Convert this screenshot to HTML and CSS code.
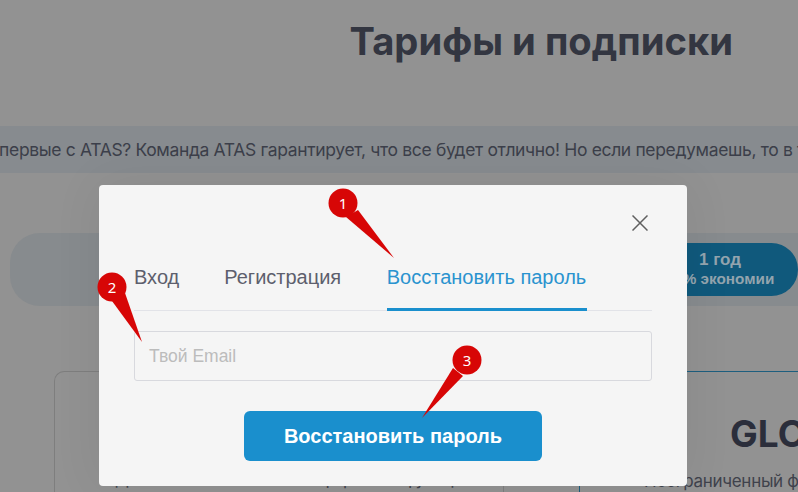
FILE: index.html
```html
<!DOCTYPE html>
<html lang="ru">
<head>
<meta charset="utf-8">
<title>Тарифы и подписки</title>
<link rel="stylesheet" href="styles.css">
</head>
<body>
<main class="page">
  <h1 class="title">Тарифы и подписки</h1>
  <div class="banner"><span class="banner-text">Впервые с ATAS? Команда ATAS гарантирует, что все будет отлично! Но если передумаешь, то в те</span></div>
  <div class="periods">
    <div class="period-year"><b>1 год</b><small>20% экономии</small></div>
  </div>
  <div class="plans">
    <div class="plan plan-left">
      <div class="plan-col"><div class="plan-text">Для ознакомления с платформой и функциями</div></div>
    </div>
    <div class="plan plan-right">
      <div class="plan-name">GLOBAL</div>
      <div class="plan-desc">Неограниченный ф</div>
    </div>
  </div>
</main>

<section class="modal">
  <div class="modal-head">
    <svg class="close" viewBox="0 0 16 16" width="16" height="16"><path d="M.5.5l15 15M15.500.5l-15 15" fill="none" stroke="#5f5f5f" stroke-width="1.500"/></svg>
  </div>
  <nav class="tabs">
    <span class="tab">Вход</span>
    <span class="tab">Регистрация</span>
    <span class="tab tab-active">Восстановить пароль</span>
  </nav>
  <div class="field"><span class="placeholder">Твой Email</span></div>
  <div class="actions"><button class="submit">Восстановить пароль</button></div>
</section>

<svg class="callout-layer" viewBox="0 0 798 492" width="798" height="492">
  <g fill="#d70606">
    <path d="M346 217 L358 210 L394 258 Z"/>
    <circle cx="343" cy="203" r="14.500"/>
    <path d="M112 301 L125 293 L142 342 Z"/>
    <circle cx="112" cy="287" r="14.500"/>
    <path d="M453 368 L463 376 L422 418 Z"/>
    <circle cx="467" cy="360" r="14.500"/>
  </g>
  <g class="callout-num" fill="#fff" text-anchor="middle">
    <text x="343" y="209">1</text>
    <text x="112" y="293">2</text>
    <text x="467" y="366">3</text>
  </g>
</svg>
</body>
</html>
```
FILE: styles.css
```css
* { box-sizing: border-box; }
html, body { margin: 0; height: 100%; }
body {
  width: 798px;
  height: 492px;
  overflow: hidden;
  position: relative;
  background: #929292;
  font-family: "Liberation Sans", Arial, sans-serif;
}
.page { height: 492px; overflow: hidden; }
.title {
  margin: 0;
  padding: 17px 0 0 349.500px;
  height: 126px;
  font-family: Inter, "Liberation Sans", sans-serif;
  font-size: 38.200px;
  line-height: 48px;
  font-weight: 700;
  color: #333641;
  white-space: nowrap;
}
.banner {
  height: 47px;
  background: #878b8f;
  overflow: hidden;
  white-space: nowrap;
  display: flex;
  align-items: center;
}
.banner-text {
  margin-left: -12px;
  font-family: Inter, "Liberation Sans", sans-serif;
  font-size: 17.500px;
  letter-spacing: -0.350px;
  color: #3c3f4a;
}
.periods {
  margin: 60px 0 0 10px;
  width: 788px;
  height: 73px;
  border-radius: 30px 0 0 30px;
  background: #878b8e;
  display: flex;
  justify-content: flex-end;
  align-items: center;
}
.period-year {
  width: 200px;
  height: 53px;
  border-radius: 0 27px 27px 0;
  background: #10597c;
  color: #93a4ae;
  display: flex;
  flex-direction: column;
  align-items: center;
  padding: 7px 0 0 44px;
  font-size: 17px;
}
.period-year b { line-height: 20px; }
.period-year small { font-size: 15.300px; font-weight: 700; line-height: 18px; white-space: nowrap; }
.plans { display: flex; margin: 65px 0 0 54px; height: 121px; }
.plan { border: 1px solid #7e7e7e; border-bottom: 0; }
.plan-left { width: 525px; border-right: 0; border-radius: 10px 0 0 0; }
.plan-col { width: 449px; height: 120px; border-right: 1px solid #7e7e7e; padding: 97px 0 0 60px; white-space: nowrap; }
.plan-text { font-family: Inter, "Liberation Sans", sans-serif; font-size: 17px; letter-spacing: -0.3px; line-height: 20px; color: #3f424c; }
.plan-right { width: 219px; border-color: #1d5e7e; border-right: 0; padding: 40px 0 0 150px; white-space: nowrap; }
.plan-name { font-family: Inter, "Liberation Sans", sans-serif; font-size: 37px; font-weight: 700; color: #2b2e3b; line-height: 44px; }
.plan-desc { margin: 14px 0 0 -86px; font-family: Inter, "Liberation Sans", sans-serif; font-size: 17px; letter-spacing: -0.3px; line-height: 22px; color: #3f424c; }
.modal {
  position: absolute;
  left: 99px;
  top: 185px;
  width: 588px;
  height: 301px;
  padding: 0 35px;
  background: #f5f5f5;
  border-radius: 4px;
  box-shadow: 0 0 50px rgba(0, 0, 0, 0.07);
}
.modal-head { height: 30px; position: relative; }
.close { position: absolute; right: 4px; top: 30px; }
.tabs {
  display: flex;
  gap: 45px;
  height: 96px;
  align-items: flex-end;
  border-bottom: 1px solid #e2e3e8;
}
.tab {
  display: block;
  height: 46px;
  margin-bottom: -1px;
  font-size: 20px;
  line-height: 24px;
  color: #5d5f6d;
}
.tab-active {
  margin-left: 0.600px;
  padding-right: 0.500px;
  color: #2a93cf;
  border-bottom: 3px solid #1a8fcd;
}
.field {
  margin-top: 20px;
  height: 50px;
  border: 1px solid #d8d9de;
  border-radius: 3px;
  display: flex;
  align-items: center;
  padding-left: 14px;
}
.placeholder { font-size: 17.500px; color: #bcbcbc; }
.actions { display: flex; justify-content: center; margin-top: 30px; }
.submit {
  width: 298px;
  height: 50px;
  border: 0;
  border-radius: 6px;
  background: #1a8fcd;
  color: #fff;
  font-family: "Liberation Sans", Arial, sans-serif;
  font-size: 20px;
  font-weight: 700;
}
.callout-layer { position: absolute; left: 0; top: 0; pointer-events: none; }
.callout-num { font-family: "Noto Sans", sans-serif; font-size: 15px; }
```
